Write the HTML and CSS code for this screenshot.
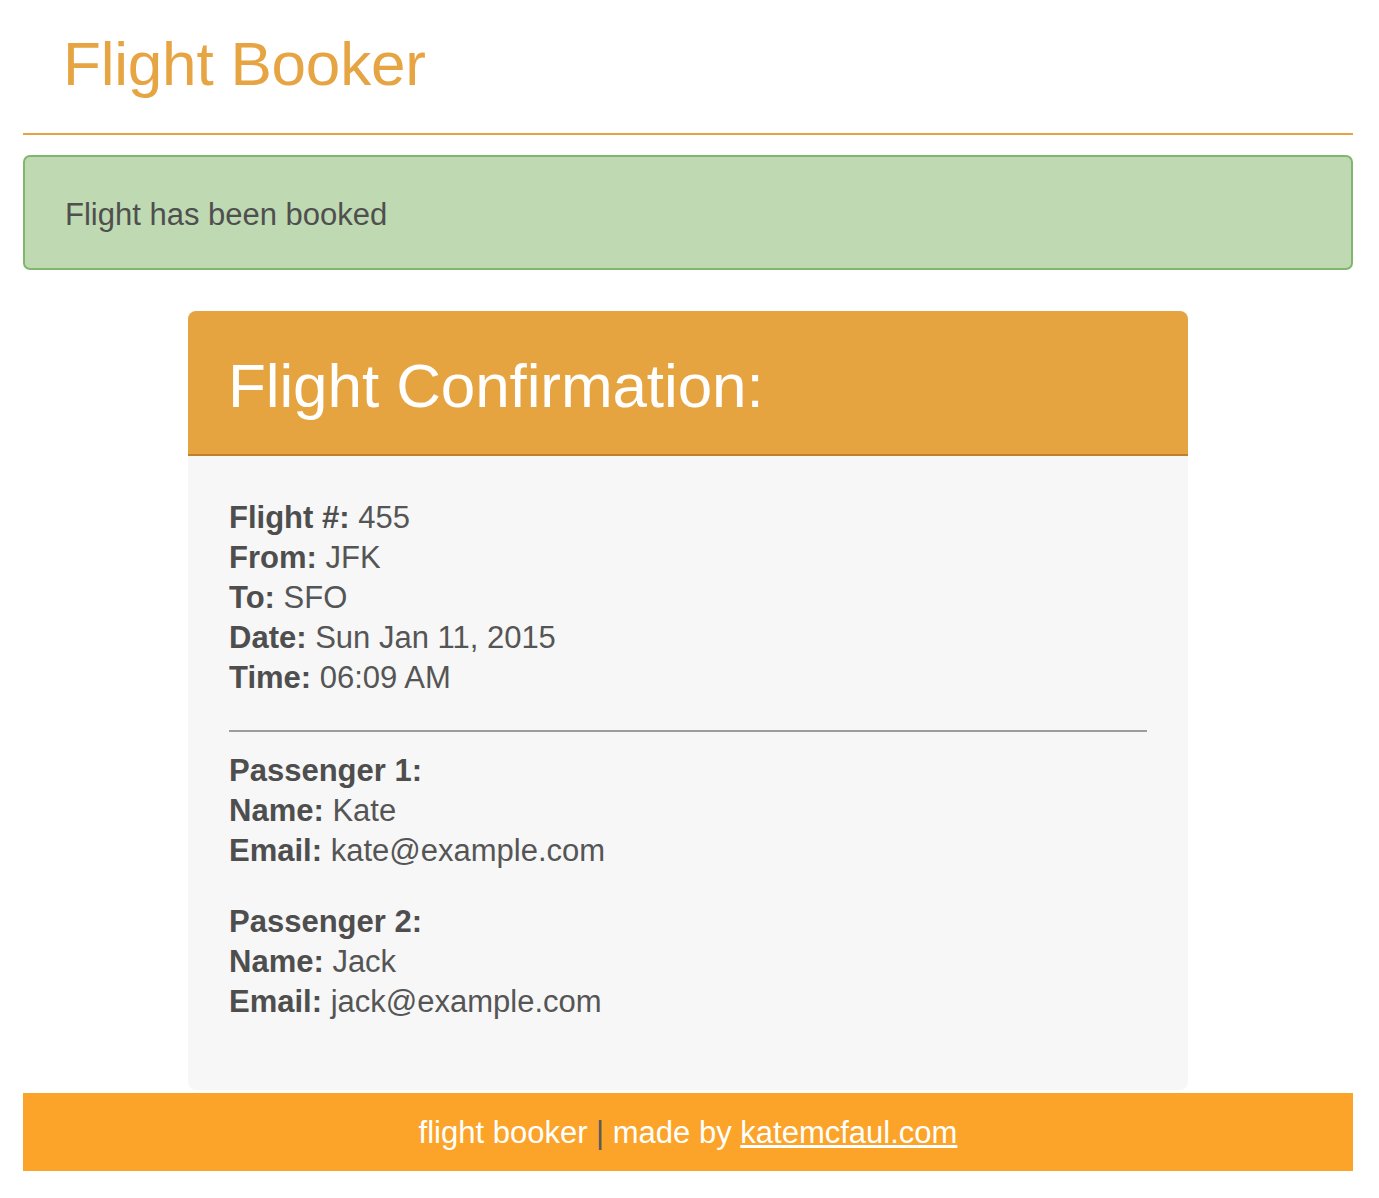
FILE: index.html
```html
<!DOCTYPE html>
<html>
<head>
<meta charset="utf-8">
<title>Flight Booker</title>
<link rel="stylesheet" href="styles.css">
</head>
<body>
<div class="container">
  <header class="site-header">
    <h1 class="brand">Flight Booker</h1>
  </header>
  <hr class="brand-rule">
  <div class="alert">Flight has been booked</div>

  <section class="card">
    <div class="card-head">
      <h2 class="card-title">Flight Confirmation:</h2>
    </div>
    <div class="card-body">
      <p class="info">
        <b>Flight #:</b> 455<br>
        <b>From:</b> JFK<br>
        <b>To:</b> SFO<br>
        <b>Date:</b> Sun Jan 11, 2015<br>
        <b>Time:</b> 06:09 AM
      </p>
      <hr class="divider">
      <p class="passenger">
        <b>Passenger 1:</b><br>
        <b>Name:</b> Kate<br>
        <b>Email:</b> kate@example.com
      </p>
      <p class="passenger">
        <b>Passenger 2:</b><br>
        <b>Name:</b> Jack<br>
        <b>Email:</b> jack@example.com
      </p>
    </div>
  </section>

  <footer class="site-footer">
    flight booker <span class="sep">|</span> made by <a href="#">katemcfaul.com</a>
  </footer>
</div>
</body>
</html>
```
FILE: styles.css
```css
html, body {
  margin: 0;
  padding: 0;
  background: #ffffff;
}

body {
  font-family: "Liberation Sans", Arial, sans-serif;
  color: #555555;
}

.container {
  width: 1330px;
  margin-left: 23px;
}

.site-header {
  padding-top: 30px;
  padding-left: 40px;
}

.brand {
  margin: 0;
  font-size: 62px;
  line-height: 68px;
  font-weight: normal;
  color: #e6a443;
  letter-spacing: -0.2px;
}

.brand-rule {
  margin: 35px 0 0 0;
  border: 0;
  height: 2px;
  background: #e5a441;
}

.alert {
  margin-top: 20px;
  border: 2px solid #80b76d;
  border-radius: 7px;
  background: #bfdab2;
  padding: 38px 40px 33px 40px;
  font-size: 31px;
  line-height: 40px;
  color: #4f4f4f;
}

.card {
  width: 1000px;
  margin: 41px auto 0 auto;
}

.card-head {
  background: #e6a441;
  border-bottom: 2px solid #c27f2a;
  border-radius: 8px 8px 0 0;
  padding: 41px 41px 35px 40px;
}

.card-title {
  margin: 0;
  font-size: 62px;
  line-height: 67px;
  font-weight: normal;
  color: #ffffff;
  letter-spacing: -0.1px;
}

.card-body {
  background: #f7f7f7;
  border-radius: 0 0 8px 8px;
  padding: 42px 41px 37px 41px;
  font-size: 31px;
  line-height: 40px;
  color: #555555;
}

.card-body b {
  color: #4e4e4e;
}

.info {
  margin: 0;
}

.divider {
  margin: 32px 0 19px 0;
  border: 0;
  height: 2px;
  background: #9d9d9d;
}

.passenger {
  margin: 0 0 31px 0;
}

.site-footer {
  margin-top: 3px;
  height: 78px;
  box-sizing: border-box;
  padding-top: 20px;
  background: #fca42a;
  text-align: center;
  font-size: 31px;
  line-height: 40px;
  color: #ffffff;
}

.site-footer .sep {
  color: #5a5a5a;
}

.site-footer a {
  color: #ffffff;
  text-decoration: underline;
}
```
